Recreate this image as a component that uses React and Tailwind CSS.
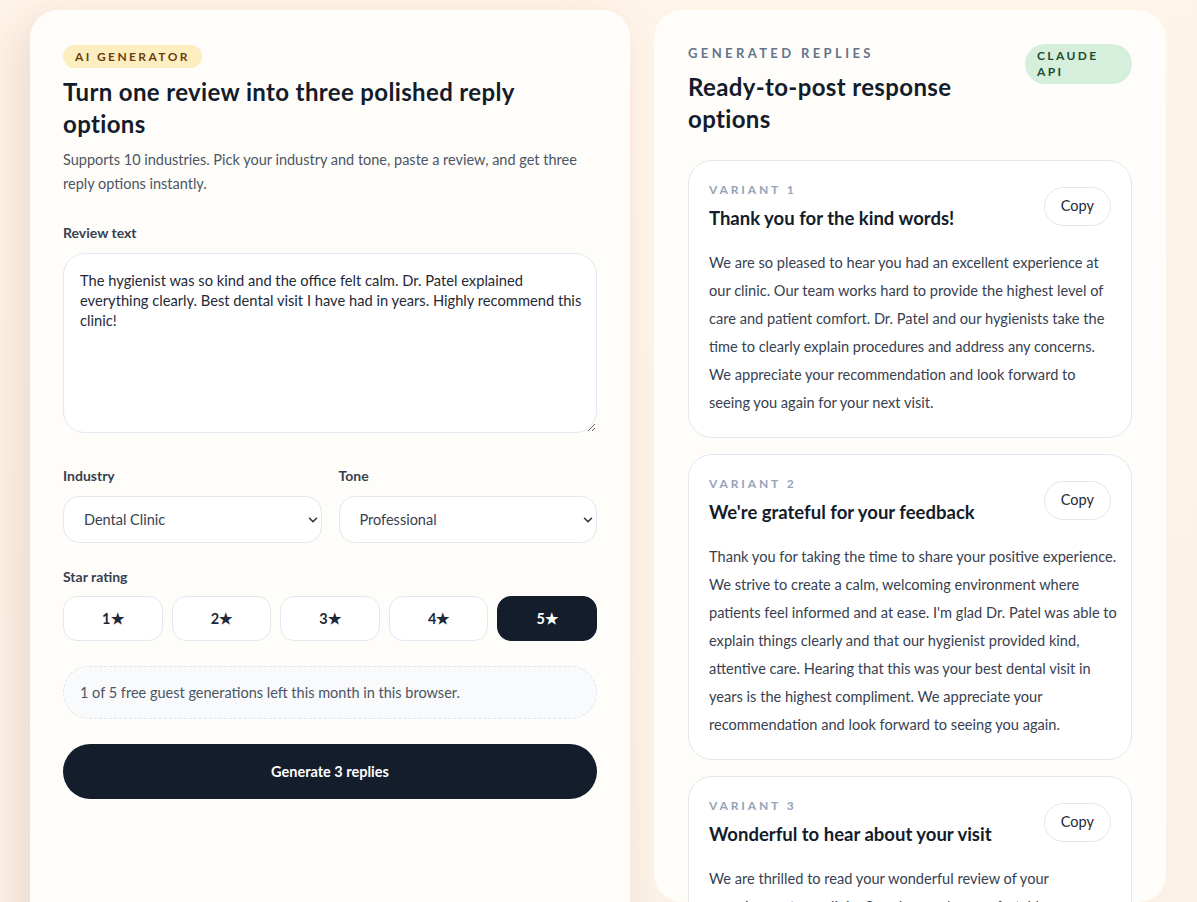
import React from 'react';
import { ChevronDown } from 'lucide-react';

const variants = [
  {
    title: 'Thank you for the kind words!',
    body: 'We are so pleased to hear you had an excellent experience at our clinic. Our team works hard to provide the highest level of care and patient comfort. Dr. Patel and our hygienists take the time to clearly explain procedures and address any concerns. We appreciate your recommendation and look forward to seeing you again for your next visit.',
  },
  {
    title: "We're grateful for your feedback",
    body: "Thank you for taking the time to share your positive experience. We strive to create a calm, welcoming environment where patients feel informed and at ease. I'm glad Dr. Patel was able to explain things clearly and that our hygienist provided kind, attentive care. Hearing that this was your best dental visit in years is the highest compliment. We appreciate your recommendation and look forward to seeing you again.",
  },
  {
    title: 'Wonderful to hear about your visit',
    body: 'We are thrilled to read your wonderful review of your experience at our clinic. Creating a calm, comfortable environment is something our whole team cares deeply about, and we are so glad it showed.',
  },
];

const Select = ({ value }) => (
  <div className="relative">
    <select
      defaultValue={value}
      className="block w-full h-[47px] appearance-none rounded-2xl border border-[#e2e8f0] bg-white pl-5 pr-10 text-[14.5px] text-[#374151] outline-none"
    >
      <option>{value}</option>
    </select>
    <ChevronDown size={14} strokeWidth={2.75} className="absolute right-[2px] top-1/2 -translate-y-1/2 text-[#2d3748] pointer-events-none" />
  </div>
);

const App = () => {
  return (
    <div
      className="h-screen overflow-hidden bg-gradient-to-b from-[#fff4e8] to-[#fcf1e6] px-[30px] pt-[10px] flex gap-6"
      style={{ fontFamily: 'Lato, "Noto Sans", sans-serif' }}
    >
      {/* Generator form */}
      <section className="w-[600px] h-[960px] shrink-0 rounded-[28px] bg-[#fffdfa] px-[33px] pt-[35px] shadow-[-12px_12px_40px_rgba(120,80,40,0.14)]">
        <span className="flex h-[23px] w-fit items-center rounded-full bg-[#fdeebf] px-3 text-xs font-bold uppercase tracking-[0.2em] text-[#6b3f12]">
          AI Generator
        </span>
        <h1 className="mt-2 max-w-[500px] text-2xl font-bold leading-8 tracking-[0.015em] text-[#131c2b]">
          Turn one review into three polished reply options
        </h1>
        <p className="mt-2 text-[14.5px] leading-6 text-[#4b5563]">
          Supports 10 industries. Pick your industry and tone, paste a review, and get three reply options instantly.
        </p>

        <label className="mt-[27px] block text-sm font-bold leading-5 text-[#374151]">Review text</label>
        <textarea
          className="mt-2.5 block h-[180px] w-full rounded-[22px] border border-[#e2e8f0] bg-white py-4 pl-4 pr-2 text-[14.7px] leading-5 text-[#1f2937] outline-none"
          defaultValue="The hygienist was so kind and the office felt calm. Dr. Patel explained everything clearly. Best dental visit I have had in years. Highly recommend this clinic!"
        />

        <div className="mt-[33px] grid grid-cols-2 gap-[17px]">
          <div>
            <label className="mb-2.5 block text-sm font-bold leading-5 text-[#374151]">Industry</label>
            <Select value="Dental Clinic" />
          </div>
          <div>
            <label className="mb-2.5 block text-sm font-bold leading-5 text-[#374151]">Tone</label>
            <Select value="Professional" />
          </div>
        </div>

        <label className="mt-6 block text-sm font-bold leading-5 text-[#374151]">Star rating</label>
        <div className="mt-[9px] grid grid-cols-5 gap-[9px]">
          {[1, 2, 3, 4, 5].map((n) => (
            <button
              key={n}
              className={
                n === 5
                  ? 'h-[45px] rounded-[14px] border border-[#141d2b] bg-[#141d2b] text-[14.5px] font-bold text-white'
                  : 'h-[45px] rounded-[14px] border border-[#e2e8f0] bg-white text-[14.5px] font-bold text-[#1f2937]'
              }
            >
              {n}★
            </button>
          ))}
        </div>

        <div className="mt-[25px] flex h-[53px] items-center rounded-[26px] border border-dashed border-[#dfe5ee] bg-[#f8fafc] px-4 text-[14.5px] text-[#4b5563]">
          1 of 5 free guest generations left this month in this browser.
        </div>

        <button className="mt-[25px] h-[55px] w-full rounded-full bg-[#141d2b] text-[14.5px] font-bold text-white">
          Generate 3 replies
        </button>
      </section>

      {/* Generated replies */}
      <section className="w-[512px] shrink-0 rounded-[28px] bg-[#fffdfa] px-[34px] pt-[35px]">
        <div className="flex items-start justify-between gap-4">
          <div>
            <div className="text-[13px] font-bold uppercase leading-4 tracking-[0.26em] text-[#64748b]">Generated replies</div>
            <h2 className="mt-[10px] max-w-[300px] text-2xl font-bold leading-8 tracking-[0.015em] text-[#131c2b]">
              Ready-to-post response options
            </h2>
          </div>
          <span className="-mt-px w-[107px] rounded-full bg-[#d5efdc] px-3 py-1 text-xs font-bold uppercase leading-4 tracking-[0.2em] text-[#1d4d2f]">
            Claude API
          </span>
        </div>

        <div className="mt-[25px] flex flex-col gap-4">
          {variants.map((v, i) => (
            <article key={i} className="rounded-3xl border border-[#e2e8f0] bg-white pl-5 pr-3 pt-[21px] pb-[20px]">
              <div className="flex items-center justify-between gap-4">
                <div>
                  <div className="text-xs font-bold uppercase leading-4 tracking-[0.24em] text-[#94a3b8]">Variant {i + 1}</div>
                  <h3 className="mt-2 text-[18.5px] font-bold leading-6 text-[#131c2b]">{v.title}</h3>
                </div>
                <button className="mr-2 h-[39px] rounded-full border border-[#e2e8f0] bg-white px-4 text-[14.5px] text-[#1f2937]">
                  Copy
                </button>
              </div>
              <p className="mt-[19px] text-[14.6px] leading-7 text-[#374151]">{v.body}</p>
            </article>
          ))}
        </div>
      </section>
    </div>
  );
};

export default App;
